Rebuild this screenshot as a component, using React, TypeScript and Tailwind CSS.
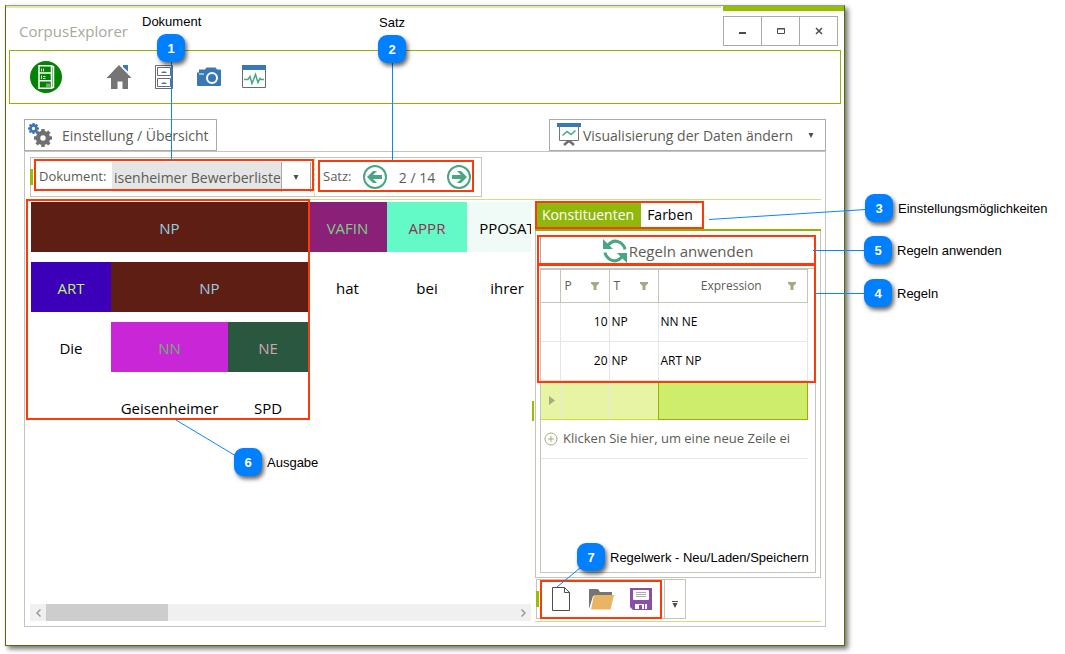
import type { ReactNode } from "react";
import clsx from "clsx";

const tree = [
  [
    { label: "NP", span: "col-span-3", style: "bg-[#5f1e13] text-[#93d2e4]" },
    { label: "VAFIN", span: "col-span-1", style: "bg-[#8b2079] text-[#78cf85]" },
    { label: "APPR", span: "col-span-1", style: "bg-[#64fac8] text-[#91304c]" },
    { label: "PPOSAT", span: "col-span-1", style: "bg-[#f0faf6] text-black" },
  ],
  [
    { label: "ART", span: "col-span-1", style: "bg-[#3b00b8] text-[#bcf563]" },
    { label: "NP", span: "col-span-2", style: "bg-[#5f1e13] text-[#93d2e4]" },
    { label: "hat", span: "col-span-1", style: "text-black" },
    { label: "bei", span: "col-span-1", style: "text-black" },
    { label: "ihrer", span: "col-span-1", style: "text-black" },
  ],
  [
    { label: "Die", span: "col-span-1", style: "text-black" },
    { label: "NN", span: "col-span-1", style: "bg-[#c926d8] text-[#6bb56a]" },
    { label: "NE", span: "col-span-1", style: "bg-[#29573f] text-[#d5a5b5]" },
    { label: "", span: "col-span-3", style: "" },
  ],
  [
    { label: "", span: "col-span-1", style: "" },
    { label: "Geisenheimer", span: "col-span-1", style: "text-black" },
    { label: "SPD", span: "col-span-1", style: "text-black" },
    { label: "", span: "col-span-3", style: "" },
  ],
];

const rules = [
  { p: 10, t: "NP", expression: "NN NE" },
  { p: 20, t: "NP", expression: "ART NP" },
];

const frames = [
  "left-[34px] top-[159px] w-[280px] h-[32px]",
  "left-[318px] top-[160px] w-[156px] h-[32px]",
  "left-[26px] top-[199px] w-[284px] h-[221px]",
  "left-[535px] top-[201px] w-[169px] h-[28px]",
  "left-[537px] top-[235px] w-[279px] h-[30px]",
  "left-[537px] top-[264px] w-[279px] h-[119px]",
  "left-[540px] top-[580px] w-[122px] h-[39px]",
];

const notes = [
  { n: 1, label: "Dokument", badge: "left-[157px] top-[34px]", text: "left-[142px] top-[14px]" },
  { n: 2, label: "Satz", badge: "left-[378px] top-[35px]", text: "left-[379px] top-[15px]" },
  { n: 3, label: "Einstellungsmöglichkeiten", badge: "left-[865px] top-[194px]", text: "left-[898px] top-[201px]" },
  { n: 5, label: "Regeln anwenden", badge: "left-[864px] top-[236px]", text: "left-[897px] top-[243px]" },
  { n: 4, label: "Regeln", badge: "left-[864px] top-[279px]", text: "left-[897px] top-[286px]" },
  { n: 6, label: "Ausgabe", badge: "left-[234px] top-[448px]", text: "left-[267px] top-[455px]" },
  { n: 7, label: "Regelwerk - Neu/Laden/Speichern", badge: "left-[577px] top-[543px]", text: "left-[610px] top-[550px]" },
];

function Caret({ className }: { className?: string }) {
  return (
    <svg viewBox="0 0 6 5" className={clsx("w-[6px] h-[5px]", className)} fill="#4d4d48">
      <path d="M.5 0h5L3 5z" />
    </svg>
  );
}

function ShelfLogo() {
  return (
    <svg viewBox="0 0 32 32" className="w-8 h-8">
      <circle cx="16" cy="16" r="16" fill="#048204" />
      <g fill="none" stroke="#fff">
        <path strokeWidth="1.5" d="M9 4.800h12.500v22.400H9zM9 12h12.500M9 19.800h12.500M21.500 4.800l2 1v20.400l-2 1" />
        <path strokeWidth=".8" d="M11.500 7.500v3M13.500 7.500v3M11.500 14.500V18M13 15.500h2.500M13 17.500h2.500M17 22.500v3.500M19 22.500v3.500" />
      </g>
    </svg>
  );
}

function HomeIcon() {
  return (
    <svg viewBox="0 0 26 26" className="w-[26px] h-[26px]">
      <path fill="#3a78b5" d="M17 1h5v6.5L17 3z" />
      <path fill="#757575" d="M13 1l12.500 13H22v11h-5.500v-7.500h-5V25H5V14H.5z" />
    </svg>
  );
}

function CabinetIcon() {
  return (
    <svg viewBox="0 0 18 24" className="w-[18px] h-6" fill="none">
      <path stroke="#6b6b6b" d="M.5.500h17v23H.500zM2.500 2.500h13v8h-13zM2.500 13.500h13v8h-13z" />
      <path fill="#3a78b5" d="M6 8l1.500-1.500h3L12 8zM6 19l1.500-1.500h3L12 19z" />
    </svg>
  );
}

function CameraIcon() {
  return (
    <svg viewBox="0 0 24 20" className="w-6 h-5">
      <path fill="#3a78b5" d="M8 2.500L9.500.500h9L20 2.500h3q1 0 1 1V18q0 1-1 1H1q-1 0-1-1V5.500h2V2.500h4z" />
      <path fill="#fff" d="M2 6.500h5v1H2z" />
      <circle cx="15" cy="11" r="5" fill="none" stroke="#fff" strokeWidth="2" />
    </svg>
  );
}

function MonitorIcon() {
  return (
    <svg viewBox="0 0 24 24" className="w-6 h-6" fill="none">
      <path stroke="#6b6b6b" d="M.5.500h23v22H.500z" />
      <path fill="#3a78b5" d="M0 0h24v5H0z" />
      <path stroke="#45a883" strokeWidth="1.500" d="M2 14.500h4l2-3 2 7 3.500-9 2.500 8 2-4 1 1h3" />
    </svg>
  );
}

function Gear({ cx, cy, r, fill }: { cx: number; cy: number; r: number; fill: string }) {
  return (
    <g transform={`translate(${cx} ${cy})`}>
      <circle r={r * 0.55} fill="none" stroke={fill} strokeWidth={r * 0.5} />
      {[0, 45, 90, 135, 180, 225, 270, 315].map((a) => (
        <rect key={a} x={-r * 0.19} y={-r} width={r * 0.38} height={r * 0.36} fill={fill} transform={`rotate(${a})`} />
      ))}
    </g>
  );
}

function GearsIcon() {
  return (
    <svg viewBox="0 0 24 24" className="w-6 h-6">
      <Gear cx={5.5} cy={5.5} r={5.5} fill="#3a78b5" />
      <Gear cx={15} cy={15} r={9} fill="#707070" />
    </svg>
  );
}

function BoardIcon() {
  return (
    <svg viewBox="0 0 24 24" className="w-6 h-6" fill="none">
      <path stroke="#757575" d="M2.500 4v13.500h19V4" />
      <path fill="#3a78b5" d="M0 0h24v4H0z" />
      <path stroke="#45a883" strokeWidth="1.500" d="M5.500 12.500l4.500-4 4 3 4.500-4" />
      <path stroke="#707070" strokeWidth="2.500" d="M7 22l4-3.500h2l4 3.500" />
    </svg>
  );
}

function ArrowCircle({ flip }: { flip?: boolean }) {
  return (
    <svg viewBox="0 0 24 24" className={clsx("w-6 h-6", flip && "rotate-180")}>
      <circle cx="12" cy="12" r="11" fill="#fff" stroke="#4aa583" strokeWidth="2" />
      <path fill="#4aa583" d="M4 12l6-6h4l-4 4h9v4h-9l4 4h-4z" />
    </svg>
  );
}

function RefreshIcon() {
  return (
    <svg viewBox="0 0 24 24" className="w-6 h-6">
      <g fill="none" stroke="#45a883" strokeWidth="3">
        <path d="M4 7.500Q10-.500 17 3.500q4.500 3 5 7" />
        <path d="M20 16.500Q14 24.500 7 20.500q-4.500-3-5-7" />
      </g>
      <path fill="#45a883" d="M0 0v10h10zM24 24V14H14z" />
    </svg>
  );
}

function FilterIcon() {
  return (
    <svg viewBox="0 0 8 8" className="w-2 h-2" fill="#a5aa83">
      <path d="M0 0h8v1.500L5.500 4v4h-3V4L0 1.500z" />
    </svg>
  );
}

function PageIcon() {
  return (
    <svg viewBox="0 0 18 24" className="w-[18px] h-6" fill="none" stroke="#4d4d4d">
      <path d="M.5.500h12l5 5v18H.500zM12.500.500v5h5" />
    </svg>
  );
}

function FolderIcon() {
  return (
    <svg viewBox="0 0 25 21" className="w-[25px] h-[21px]">
      <path fill="#757575" d="M0 0h9l2 3h12v4H4L0 20z" />
      <path fill="#e8b564" d="M5 6h20l-3.500 14.500H2z" />
    </svg>
  );
}

function SaveIcon() {
  return (
    <svg viewBox="0 0 22 22" className="w-[22px] h-[22px]">
      <path fill="#8a4fa8" d="M0 0h22v22H3l-3-3z" />
      <path fill="#fff" d="M4 2h14q1 0 1 1v8q0 1-1 1H4q-1 0-1-1V3q0-1 1-1zM5 16h12v5H5z" />
      <path fill="none" stroke="#aaa" d="M6 4.500h10M6 6.500h10M6 8.500h10" />
      <path fill="#8a4fa8" d="M9 17h3v4H9zM14 16h1v5h-1z" />
    </svg>
  );
}

function WindowButton({ label, children }: { label: string; children: ReactNode }) {
  return (
    <button aria-label={label} className="flex w-[39px] h-[30px] -ml-px items-center justify-center border border-[#aaa]">
      <svg viewBox="0 0 8 8" className="w-2 h-2" fill="none" stroke="#4d4d48">
        {children}
      </svg>
    </button>
  );
}

function TitleBar() {
  return (
    <header className="flex h-[44px] justify-between">
      <div className="flex flex-1 items-center border-t-2 border-[#dfeda2] pl-[13px] pt-1 text-[15px] text-[#aaa79c]">
        CorpusExplorer
      </div>
      <div className="border-t-[5px] border-[#94c000] pt-[5px] pr-[6px] pl-px ml-[2px]">
        <div className="flex">
          <WindowButton label="Minimieren"><path strokeWidth="2" d="M0 6h7" /></WindowButton>
          <WindowButton label="Maximieren"><path d="M.5 1.500h7v5h-7zM0 2h8" /></WindowButton>
          <WindowButton label="Schließen"><path strokeWidth="1.500" d="M1 1l6 6M7 1L1 7" /></WindowButton>
        </div>
      </div>
    </header>
  );
}

function MainToolbar() {
  return (
    <nav className="mx-[3px] flex h-[54px] items-center border border-[#90b400] pl-5">
      <button aria-label="Projekt"><ShelfLogo /></button>
      <button aria-label="Start" className="ml-11"><HomeIcon /></button>
      <button aria-label="Archiv" className="ml-[23px]"><CabinetIcon /></button>
      <button aria-label="Schnappschuss" className="ml-6"><CameraIcon /></button>
      <button aria-label="Analyse" className="ml-[21px]"><MonitorIcon /></button>
    </nav>
  );
}

function DocumentStrip() {
  return (
    <div className="flex h-[40px] w-[452px] items-center border border-[#c4c4b8]">
      <span className="-ml-px h-4 w-[3px] bg-[#94c000]" />
      <label htmlFor="dokument" className="ml-[6px] w-[73px] text-[13px] text-[#5c5c56]">Dokument:</label>
      <div className="relative h-[30px] w-[199px] border-r border-[#aaa]">
        <select id="dokument" className="h-full w-full appearance-none bg-[#e5e5e5] pl-[2px] text-[14px] text-[#5c5c56]">
          <option>isenheimer Bewerberliste</option>
        </select>
        <span className="pointer-events-none absolute inset-y-0 right-0 flex w-[29px] items-center justify-center border-l border-[#aaa] bg-white">
          <Caret />
        </span>
      </div>
      <div className="ml-[3px] flex h-full items-center border-l border-dashed border-[#d3e08c] pl-2 text-[13px] text-[#5c5c56]">
        <span className="w-10">Satz:</span>
        <button aria-label="Vorheriger Satz"><ArrowCircle /></button>
        <span className="w-[60px] text-center text-[14px]">2 / 14</span>
        <button aria-label="Nächster Satz"><ArrowCircle flip /></button>
      </div>
    </div>
  );
}

function Output() {
  return (
    <section className="flex min-w-0 flex-1 flex-col justify-between pb-[1px] pt-[2px]">
      <div className="ml-px overflow-hidden">
        <div className="grid w-max grid-cols-[80px_117px_80px_79px_80px_80px] gap-y-[10px] text-[15px]">
          {tree.map((row) =>
            row.map((cell, i) => (
              <div key={i} className={clsx("flex h-[50px] items-center justify-center pt-[2px]", cell.span, cell.style)}>
                {cell.label}
              </div>
            ))
          )}
        </div>
      </div>
      <div className="flex h-[17px] bg-[#f0f0f0]">
        <button aria-label="Nach links" className="flex w-4 items-center justify-center">
          <svg viewBox="0 0 5 8" className="h-2 w-[5px]" fill="none" stroke="#999" strokeWidth="1.500"><path d="M4.500.500L1 4l3.500 3.500" /></svg>
        </button>
        <div className="flex-1">
          <div className="h-full w-[26%] bg-[#cdcdcd]" />
        </div>
        <button aria-label="Nach rechts" className="flex w-4 items-center justify-center">
          <svg viewBox="0 0 5 8" className="h-2 w-[5px]" fill="none" stroke="#999" strokeWidth="1.500"><path d="M.5.500L4 4 .5 7.500" /></svg>
        </button>
      </div>
    </section>
  );
}

function RuleTable() {
  return (
    <div className="mt-[2px] min-h-[305px] border border-[#c4c4b8] pr-[7px]">
      <table className="w-full table-fixed border-collapse text-[12px] text-black">
        <colgroup>
          <col className="w-[19px]" />
          <col className="w-[49px]" />
          <col className="w-[49px]" />
          <col />
        </colgroup>
        <thead>
          <tr className="h-[33px] text-left text-[#5c5c56]">
            <th className="border border-l-0 border-[#c4c4b8]" />
            {["P", "T"].map((name) => (
              <th key={name} className="border border-[#c4c4b8] pl-1 pr-[10px] font-normal">
                <div className="flex items-center justify-between">{name}<FilterIcon /></div>
              </th>
            ))}
            <th className="border border-[#c4c4b8] pl-4 pr-[11px] font-normal">
              <div className="flex items-center"><span className="flex-1 text-center">Expression</span><FilterIcon /></div>
            </th>
          </tr>
        </thead>
        <tbody>
          {rules.map((rule) => (
            <tr key={rule.p} className="h-[39px]">
              <td className="border border-l-0 border-[#e6e6e6]" />
              <td className="border border-[#e6e6e6] pr-px text-right">{rule.p}</td>
              <td className="border border-[#e6e6e6] pl-[2px]">{rule.t}</td>
              <td className="border border-[#e6e6e6] pl-[2px]">{rule.expression}</td>
            </tr>
          ))}
          <tr className="h-[39px] bg-[#e6f4a4]">
            <td className="border-y border-[#c4e538] pl-2">
              <svg viewBox="0 0 6 9" className="h-[9px] w-[6px]" fill="#a5aa83"><path d="M0 0l6 4.500L0 9z" /></svg>
            </td>
            <td className="border border-x-[#e6e6e6] border-y-[#c4e538]" />
            <td className="border border-x-[#e6e6e6] border-y-[#c4e538]" />
            <td className="bg-[#cfed6c] outline outline-1 -outline-offset-1 outline-[#90b400]" />
          </tr>
          <tr className="h-[39px]">
            <td colSpan={4} className="border-b border-[#e6e6e6]">
              <button className="flex items-center gap-[5px] pl-[3px] text-[13px] whitespace-nowrap text-[#5c5c56]">
                <svg viewBox="0 0 14 14" className="h-[14px] w-[14px]" fill="none" stroke="#a5aa83">
                  <circle cx="7" cy="7" r="6" />
                  <path d="M4 7h6M7 4v6" />
                </svg>
                Klicken Sie hier, um eine neue Zeile ei
              </button>
            </td>
          </tr>
        </tbody>
      </table>
    </div>
  );
}

function RulesPane() {
  return (
    <aside className="w-[286px] shrink-0">
      <div role="tablist" className="flex h-[31px] border-b-2 border-[#90b400] pt-px text-[14px]">
        <button role="tab" aria-selected="true" className="w-[106px] bg-[#90b80c] pb-[2px] text-white">Konstituenten</button>
        <button role="tab" aria-selected="false" className="w-[58px] pb-[2px] text-black">Farben</button>
      </div>
      <div className="border border-t-0 border-[#c4c4b8] px-1 pb-1 pt-1">
        <button className="flex h-[31px] w-full items-center justify-center gap-[2px] border border-[#aaa] pt-px text-[15px] text-[#5c5c56]">
          <RefreshIcon />
          Regeln anwenden
        </button>
        <RuleTable />
      </div>
      <div className="border-b border-[#d0e08a] pb-[2px] pt-px">
        <div className="ml-px flex h-10 w-[150px] items-center border border-[#c4c4b8]">
          <span className="-ml-px h-4 w-[3px] bg-[#94c000]" />
          <button aria-label="Neu" className="ml-[13px]"><PageIcon /></button>
          <button aria-label="Laden" className="ml-[19px]"><FolderIcon /></button>
          <button aria-label="Speichern" className="ml-4"><SaveIcon /></button>
          <button aria-label="Mehr" className="ml-auto flex h-full w-[21px] flex-col items-center justify-center gap-px border-l border-[#c4c4b8] pt-[10px]">
            <span className="h-px w-[6px] bg-[#4d4d48]" />
            <Caret />
          </button>
        </div>
      </div>
    </aside>
  );
}

function Annotations() {
  return (
    <div className="pointer-events-none absolute inset-0 font-['Liberation_Sans',sans-serif] text-[13px] text-black">
      {frames.map((pos) => (
        <div key={pos} className={clsx("absolute border-2 border-[#ff3a0a]", pos)} />
      ))}
      <svg className="absolute left-0 top-0 h-full w-full" fill="none" stroke="#0a84ff">
        <path d="M171.500 60v101M392.500 60v100M866 209.500L709 219.500M866 250.500h-53M866 293.500h-51M236 456l-60-36M580 568l-23 19" />
      </svg>
      {notes.map((note) => (
        <div key={note.n}>
          <span className={clsx("absolute flex h-7 w-7 items-center justify-center rounded-[9px] bg-[#0080ff] pt-px font-bold text-white shadow-[2px_3px_4px_rgba(0,0,0,0.6)]", note.badge)}>
            {note.n}
          </span>
          <span className={clsx("absolute whitespace-nowrap leading-4", note.text)}>{note.label}</span>
        </div>
      ))}
    </div>
  );
}

export default function App() {
  return (
    <div className="relative min-h-screen bg-white pb-2 pl-[5px] pr-[220px] pt-[5px] font-['Open_Sans','Noto_Sans',sans-serif]">
      <main className="border border-[#556b0a] border-t-[#999] bg-white pb-[18px] shadow-[3px_3px_5px_rgba(0,0,0,0.55)]">
        <TitleBar />
        <MainToolbar />
        <div className="mx-[18px] mt-[15px]">
          <div className="flex h-8 justify-between text-[14px] text-[#5c5c56]">
            <button className="flex items-center gap-[10px] border border-[#aaa] pl-[3px] pr-[7px]">
              <GearsIcon />
              Einstellung / Übersicht
            </button>
            <button className="flex items-center gap-[2px] border border-[#aaa] pl-[7px] pr-[11px]">
              <BoardIcon />
              Visualisierung der Daten ändern
              <Caret className="ml-[13px]" />
            </button>
          </div>
          <div className="border border-[#c4c4b8] pb-1 pl-[5px] pr-1 pt-[5px]">
            <DocumentStrip />
            <div className="mt-[2px] flex border-t border-[#d0e08a]">
              <Output />
              <div className="flex w-1 shrink-0 items-center justify-center">
                <span className="h-5 w-[2px] bg-[#94c000]" />
              </div>
              <RulesPane />
            </div>
          </div>
        </div>
      </main>
      <Annotations />
    </div>
  );
}
